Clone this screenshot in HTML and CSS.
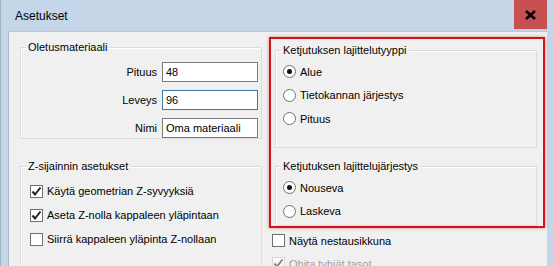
FILE: index.html
```html
<!DOCTYPE html>
<html lang="fi">
<head>
  <meta charset="UTF-8" />
  <title>Asetukset</title>
  <link rel="stylesheet" href="styles.css">
</head>
<body>
  <div class="window">
    <div class="titlebar">
      <span class="title">Asetukset</span>
      <span class="close">
        <svg width="11" height="10" viewBox="0 0 11 10"><path d="M1 1 L10 9 M10 1 L1 9" stroke="#000" stroke-width="2.6"/></svg>
      </span>
    </div>
    <div class="client">
      <div class="col left">
        <fieldset class="group material">
          <legend>Oletusmateriaali</legend>
          <div class="fields">
            <label>Pituus</label>
            <div class="input">48</div>
            <label>Leveys</label>
            <div class="input focus">96</div>
            <label>Nimi</label>
            <div class="input">Oma materiaali</div>
          </div>
        </fieldset>
        <fieldset class="group zpos">
          <legend>Z-sijainnin asetukset</legend>
          <div class="check on"><span class="box"></span>Käytä geometrian Z-syvyyksiä</div>
          <div class="check on"><span class="box"></span>Aseta Z-nolla kappaleen yläpintaan</div>
          <div class="check"><span class="box"></span>Siirrä kappaleen yläpinta Z-nollaan</div>
        </fieldset>
      </div>
      <div class="col right">
        <div class="highlight">
          <fieldset class="group sorttype">
            <legend>Ketjutuksen lajittelutyyppi</legend>
            <div class="radio on"><span class="dot"></span>Alue</div>
            <div class="radio"><span class="dot"></span>Tietokannan järjestys</div>
            <div class="radio"><span class="dot"></span>Pituus</div>
          </fieldset>
          <fieldset class="group sortorder">
            <legend>Ketjutuksen lajittelujärjestys</legend>
            <div class="radio on"><span class="dot"></span>Nouseva</div>
            <div class="radio"><span class="dot"></span>Laskeva</div>
          </fieldset>
        </div>
        <div class="extra">
          <div class="check"><span class="box"></span>Näytä nestausikkuna</div>
          <div class="check on disabled"><span class="box"></span>Ohita tyhjät tasot</div>
        </div>
      </div>
    </div>
  </div>
</body>
</html>
```

FILE: styles.css
```css
body {
  margin: 0;
  background: #c4d6e8;
  font-family: "Liberation Sans", Arial, sans-serif;
  font-size: 11px;
  color: #000;
}
.window {
  width: 554px;
  height: 266px;
  overflow: hidden;
  background: #c4d6e8;
  border-left: 1px solid #9fb3c7;
  box-sizing: border-box;
}
.titlebar {
  height: 31px;
  display: flex;
  justify-content: space-between;
  align-items: flex-start;
}
.title {
  font-size: 12px;
  padding: 9px 0 0 14px;
  line-height: 14px;
}
.close {
  width: 33px;
  height: 29px;
  margin-right: 7px;
  background: #c75050;
  display: flex;
  align-items: center;
  justify-content: center;
}
.client {
  margin: 0 7px 0 7px;
  height: 235px;
  background: #f0f0f0;
  border-left: 1px solid #a8b8c8;
  border-top: 1px solid #b8c8d8;
  display: flex;
  gap: 7px;
  padding-left: 11px;
}
.col {
  display: flex;
  flex-direction: column;
}
.left {
  width: 242px;
}
.right {
  width: 276px;
}
.group {
  margin: 0;
  border: 1px solid #dcdcdc;
  box-shadow: inset 1px 1px 0 #fff;
  padding: 0;
}
legend {
  padding: 0 2px;
  margin-left: 5px;
  line-height: 14px;
  color: #000;
}
.material {
  margin-top: 8px;
  height: 111px;
  box-sizing: border-box;
  padding: 8px 3px 0 0;
}
.fields {
  display: grid;
  grid-template-columns: 1fr 96px;
  column-gap: 5px;
  row-gap: 8px;
  align-items: center;
}
.fields label {
  text-align: right;
}
.input {
  height: 20px;
  box-sizing: border-box;
  border: 1px solid #7a7a7a;
  background: #fff;
  padding: 0 3px;
  line-height: 18px;
}
.input.focus {
  border-color: #3d7bad;
}
.zpos {
  margin-top: 20px;
  height: 120px;
  padding-top: 6px;
}
.zpos .check {
  margin-left: 9px;
  height: 24px;
}
.check, .radio {
  display: flex;
  align-items: center;
  line-height: 14px;
  height: 23.5px;
}
.box {
  width: 13px;
  height: 13px;
  box-sizing: border-box;
  border: 1px solid #707070;
  background: #fff;
  margin-right: 4px;
  flex: none;
}
.check.on .box {
  background: #fff url("data:image/svg+xml,%3Csvg xmlns='http://www.w3.org/2000/svg' width='11' height='11'%3E%3Cpath d='M1.5 5.5 L4 8.5 L9.5 1.5' fill='none' stroke='%23222' stroke-width='2'/%3E%3C/svg%3E") center no-repeat;
}
.check.disabled {
  color: #a0a0a0;
}
.check.disabled .box {
  border-color: #c0c0c0;
  opacity: 0.5;
}
.dot {
  width: 13px;
  height: 13px;
  box-sizing: border-box;
  border: 1px solid #707070;
  border-radius: 50%;
  background: #fff;
  margin-right: 4px;
  flex: none;
  display: flex;
  align-items: center;
  justify-content: center;
}
.radio.on .dot::after {
  content: "";
  width: 5px;
  height: 5px;
  border-radius: 50%;
  background: #111;
}
.highlight {
  margin-top: 5px;
  height: 194px;
  box-sizing: border-box;
  border: 2px solid #d4121e;
  box-shadow: 0 0 3px rgba(212, 18, 30, 0.5);
  padding: 4px 6px 0 4px;
  display: flex;
  flex-direction: column;
}
.highlight .radio {
  margin-left: 7px;
}
.sorttype {
  height: 100px;
  padding-top: 3px;
}
.sortorder {
  margin-top: 11px;
  height: 62px;
  padding-top: 3px;
}
.extra {
  padding: 1px 0 0 3px;
}
.extra .check {
  height: 23px;
}
```
